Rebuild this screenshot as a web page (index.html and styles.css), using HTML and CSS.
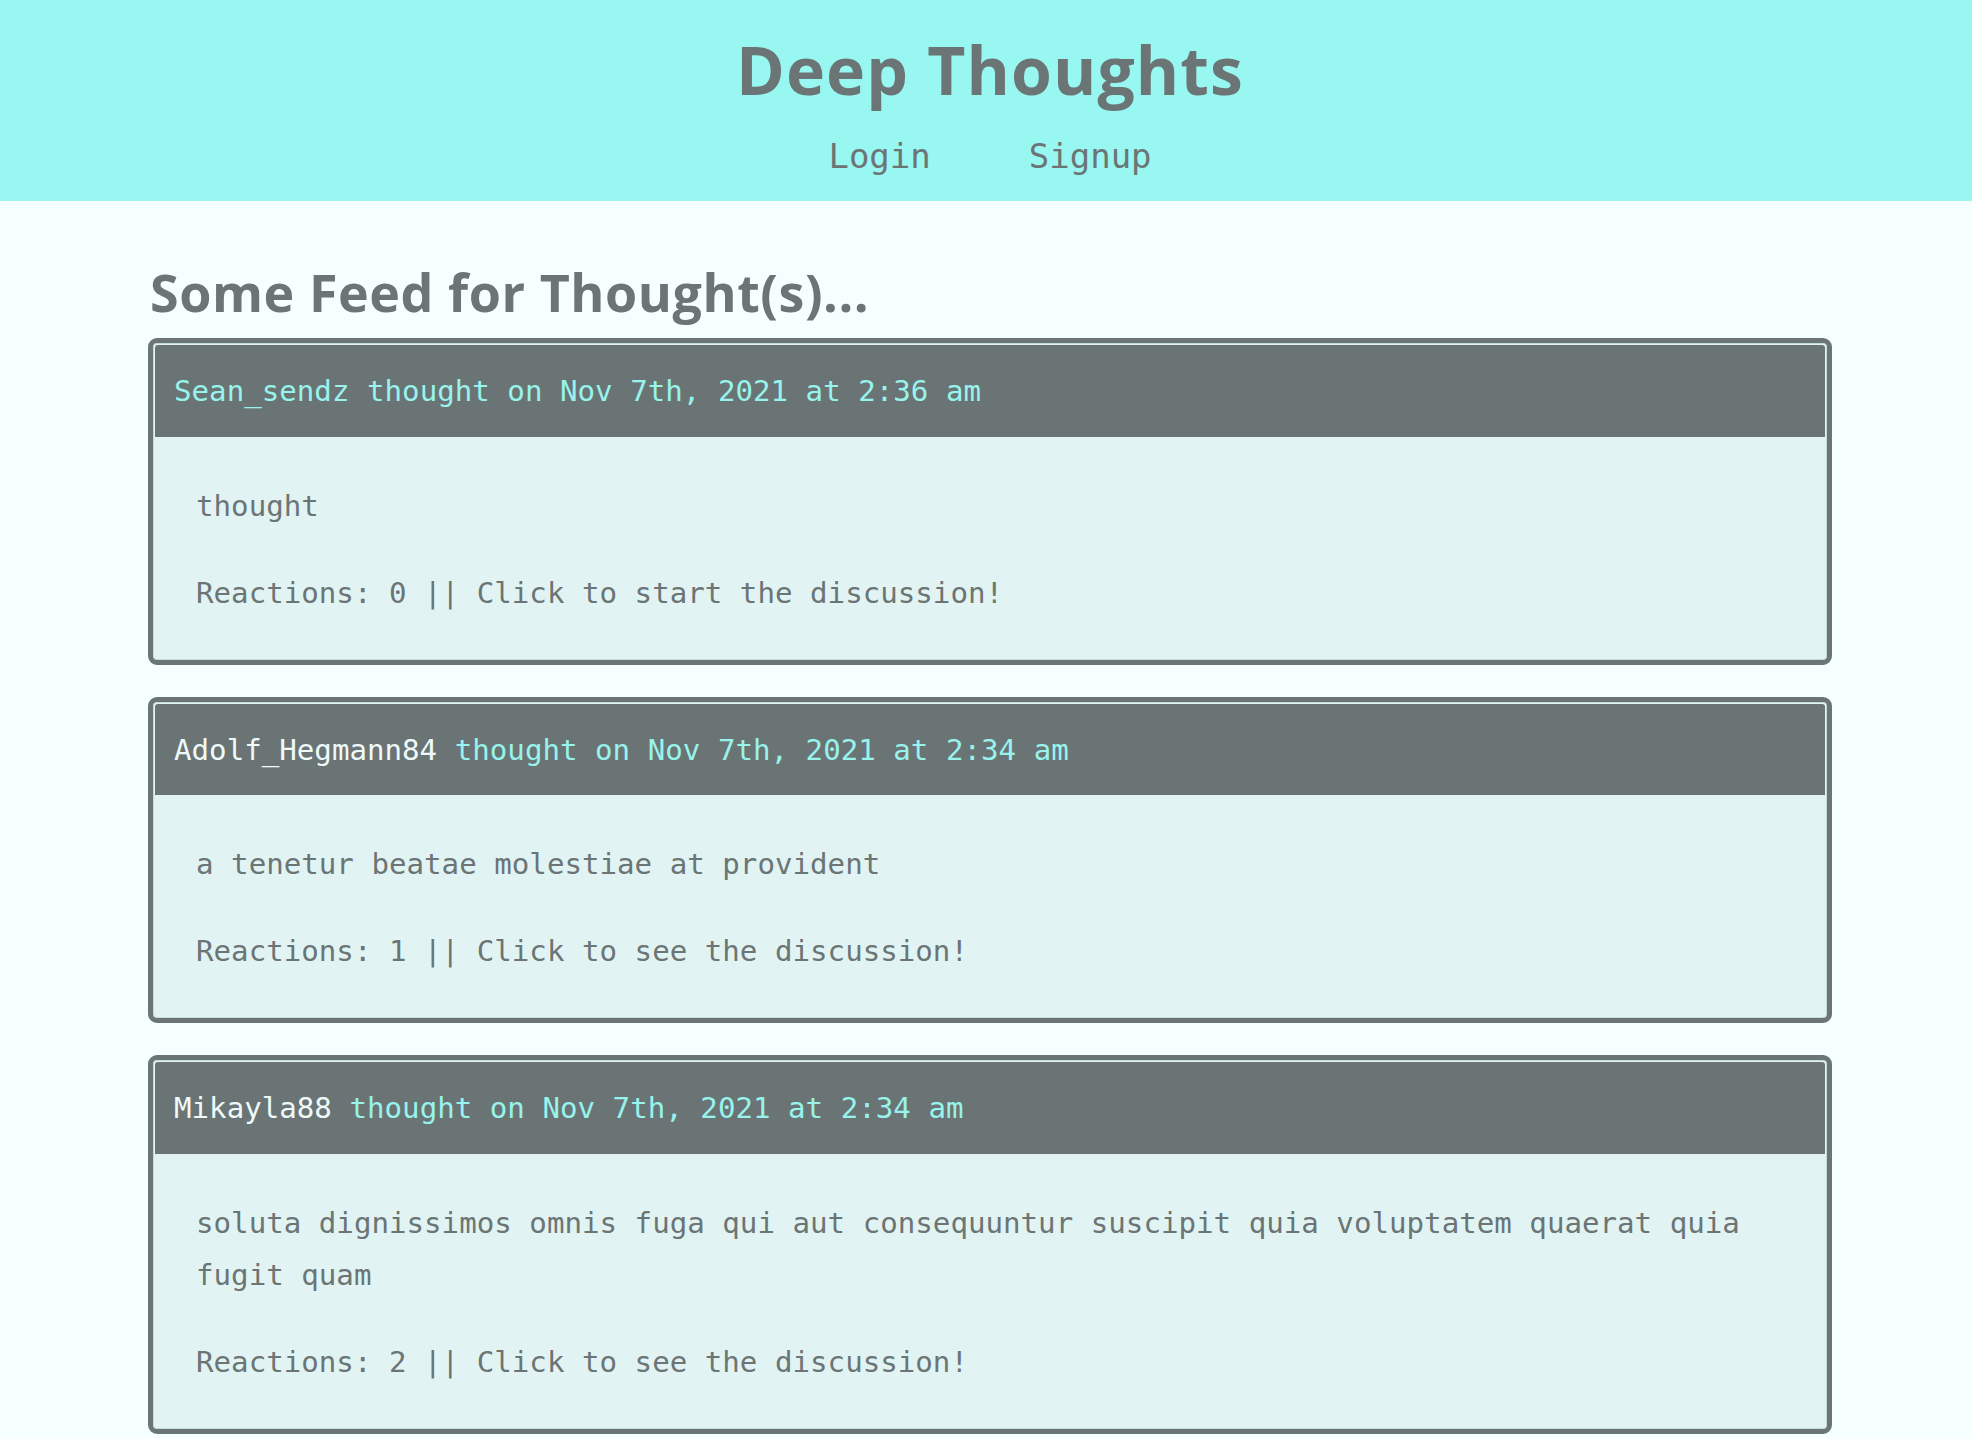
FILE: index.html
```html
<!DOCTYPE html>
<html lang="en">
<head>
<meta charset="utf-8">
<title>Deep Thoughts</title>
<link rel="stylesheet" href="styles.css">
</head>
<body>
<header class="site-header">
  <h1 class="site-title">Deep Thoughts</h1>
  <nav class="site-nav">
    <a class="nav-link" href="#">Login</a>
    <a class="nav-link" href="#">Signup</a>
  </nav>
</header>
<main class="feed">
  <h2 class="feed-title">Some Feed for Thought(s)...</h2>
  <div class="card-list">
    <article class="card">
      <div class="card-header"><span class="author author-self">Sean_sendz</span> thought on Nov 7th, 2021 at 2:36 am</div>
      <div class="card-body">
        <p class="card-text">thought</p>
        <p class="card-text">Reactions: 0 || Click to start the discussion!</p>
      </div>
    </article>
    <article class="card">
      <div class="card-header"><span class="author">Adolf_Hegmann84</span> thought on Nov 7th, 2021 at 2:34 am</div>
      <div class="card-body">
        <p class="card-text">a tenetur beatae molestiae at provident</p>
        <p class="card-text">Reactions: 1 || Click to see the discussion!</p>
      </div>
    </article>
    <article class="card">
      <div class="card-header"><span class="author">Mikayla88</span> thought on Nov 7th, 2021 at 2:34 am</div>
      <div class="card-body">
        <p class="card-text">soluta dignissimos omnis fuga qui aut consequuntur suscipit quia voluptatem quaerat quia fugit quam</p>
        <p class="card-text">Reactions: 2 || Click to see the discussion!</p>
      </div>
    </article>
  </div>
</main>
</body>
</html>
```
FILE: styles.css
```css
html, body {
  margin: 0;
  padding: 0;
}

body {
  background: #f5fffe;
  color: #6c7575;
  font-family: "DejaVu Sans Mono", "Liberation Mono", monospace;
}

.site-header {
  box-sizing: border-box;
  height: 201px;
  padding: 36px 0 0 8px;
  background: #98f7f1;
  display: flex;
  flex-direction: column;
  align-items: center;
}

.site-title {
  margin: 0;
  font-family: "Open Sans", "Liberation Sans", sans-serif;
  font-weight: 700;
  font-size: 66px;
  line-height: 66px;
  color: #6c7575;
  letter-spacing: 1.1px;
}

.site-nav {
  margin-top: 37px;
  display: flex;
  gap: 98px;
  font-size: 34px;
  line-height: 34px;
}

.nav-link {
  color: #6c7575;
  text-decoration: none;
}

.feed {
  padding: 0 140px 40px 148px;
}

.feed-title {
  margin: 65px 0 20px;
  padding-left: 2px;
  font-family: "Open Sans", "Liberation Sans", sans-serif;
  font-weight: 700;
  font-size: 52px;
  line-height: 52px;
  color: #6c7575;
  letter-spacing: 0.55px;
}

.card-list {
  display: flex;
  flex-direction: column;
  gap: 32px;
}

.card {
  border: 5px solid #6c7575;
  border-radius: 9px;
  padding: 2px;
  background: #e1f4f3;
  box-shadow: inset 0 0 0 1px #c4dcd8;
}

.card-header {
  padding: 25px 19px 23px;
  background: #6b7474;
  border-radius: 3px 3px 0 0;
  color: #97f3ec;
  font-size: 29.15px;
  line-height: 1.5;
}

.author {
  color: #eefafa;
}

.author-self {
  color: #97f3ec;
}

.card-body {
  padding: 43px 41px 39px;
  display: flex;
  flex-direction: column;
  gap: 35px;
}

.card-text {
  margin: 0;
  font-size: 29.15px;
  line-height: 52px;
  color: #6c7575;
}
```
